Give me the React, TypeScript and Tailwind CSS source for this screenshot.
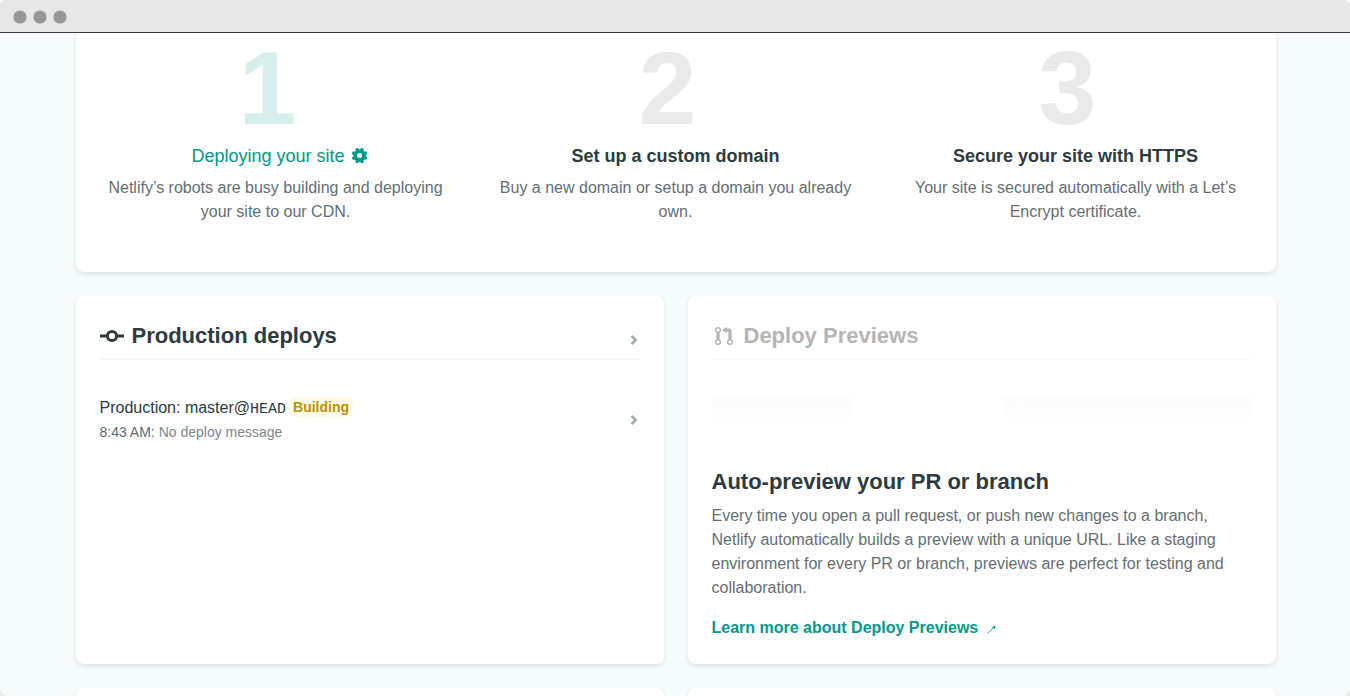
import type { ReactNode } from "react";

const teeth = [22.5, 67.5, 112.5, 157.5, 202.5, 247.5, 292.5, 337.5];

function GearIcon() {
  return (
    <svg width="16" height="16" viewBox="0 0 16 16" fill="currentColor" aria-hidden="true">
      <circle cx="7.600" cy="7.600" r="4.4" fill="none" stroke="currentColor" strokeWidth="3.800" />
      {teeth.map((angle) => (
        <rect key={angle} x="6" y="-0.300" width="3.200" height="3" rx="0.700" transform={`rotate(${angle} 7.6 7.6)`} />
      ))}
    </svg>
  );
}

function CommitIcon() {
  return (
    <svg className="shrink-0" width="24" height="24" viewBox="0 0 24 24" fill="none" stroke="currentColor" aria-hidden="true">
      <path strokeWidth="3" d="M0 12h7M17 12h7" />
      <circle cx="12" cy="12" r="4.600" strokeWidth="3" />
    </svg>
  );
}

function PullRequestIcon() {
  return (
    <svg className="shrink-0" width="24" height="24" viewBox="0 0 24 24" fill="none" stroke="currentColor" aria-hidden="true">
      <circle cx="6" cy="6" r="2.300" strokeWidth="1.500" />
      <circle cx="6" cy="18" r="2.300" strokeWidth="1.500" />
      <circle cx="18" cy="18" r="2.300" strokeWidth="1.500" />
      <path strokeWidth="3.200" d="M6 8.500v7M18 15.500V6" />
      <path strokeWidth="3" d="M19 6H13" />
      <path fill="currentColor" stroke="none" d="M9.500 6 15 3v6z" />
    </svg>
  );
}

function Chevron() {
  return (
    <svg className="mr-0.5 shrink-0" width="8" height="10" viewBox="0 0 8 10" fill="none" stroke="#a3a9ac" strokeWidth="2.600" aria-hidden="true">
      <path d="M1.600 1 5.600 5 1.600 9" />
    </svg>
  );
}

function Step({ number, active, title, children }: { number: number; active?: boolean; title: ReactNode; children: ReactNode }) {
  return (
    <li className="px-4 text-center">
      <div className={active ? "pr-4 text-[104px] leading-none font-bold text-[#d6efec]" : "pr-4 text-[104px] leading-none font-bold text-[#eaeaea]"}>
        {number}
      </div>
      <h3 className={active ? "mt-1 flex items-center justify-center gap-[7px] pl-2 text-lg leading-6 text-[#00998a]" : "mt-1 text-lg leading-6 font-bold text-[#2d3b41]"}>
        {title}
      </h3>
      <p className="mt-2 text-base leading-6 text-[#646e73]">{children}</p>
    </li>
  );
}

const card = "rounded-lg bg-white shadow-[0_2px_4px_rgba(14,30,37,0.12)]";

export default function App() {
  return (
    <div className="h-screen bg-[#ececec] font-['Liberation_Sans',Arial,sans-serif] text-[#2d3b41]">
      <div className="flex h-full flex-col overflow-hidden rounded-b-lg bg-[#f6fcfc]">
        <header className="relative flex h-[33px] shrink-0 items-center rounded-t-md border-b border-[#3b3a45] bg-[#e7e7e7]">
          <svg width="80" height="32" viewBox="0 0 80 32" fill="#979797" aria-hidden="true">
            <circle cx="20" cy="17" r="6.600" />
            <circle cx="40" cy="17" r="6.600" />
            <circle cx="60" cy="17" r="6.600" />
          </svg>
        </header>

        <main className="min-h-0 flex-1 pl-px">
          <div className="mx-auto max-w-[1200px]">
            <section className="rounded-b-lg bg-white pt-[3px] pb-12 shadow-[0_2px_4px_rgba(14,30,37,0.12)]">
              <ol className="grid grid-cols-3">
                <Step number={1} active title={<>Deploying your site <GearIcon /></>}>
                  Netlify’s robots are busy building and deploying your site to our CDN.
                </Step>
                <Step number={2} title="Set up a custom domain">
                  Buy a new domain or setup a domain you already own.
                </Step>
                <Step number={3} title="Secure your site with HTTPS">
                  Your site is secured automatically with a Let’s Encrypt certificate.
                </Step>
              </ol>
            </section>

            <div className="mt-6 grid grid-cols-2 gap-6">
              <section className={`${card} p-6`}>
                <a href="#deploys" className="flex items-center border-b-2 border-[#f5f5f5] pb-1.5">
                  <CommitIcon />
                  <h2 className="ml-2 flex-1 text-[22px] leading-8 font-bold">Production deploys</h2>
                  <span className="pt-2"><Chevron /></span>
                </a>
                <a href="#deploy" className="mt-6 flex items-center py-3">
                  <div className="flex-1">
                    <div className="flex h-6 items-center text-base leading-6">
                      <span>
                        Production: master@<code className="font-['Liberation_Mono',monospace] text-[15px] leading-none">HEAD</code>
                      </span>
                      <span className="mb-0.5 ml-[3px] rounded-md bg-[#fffbe6] px-1 text-sm leading-5 font-bold text-[#bb9107]">Building</span>
                    </div>
                    <p className="text-sm leading-6 text-[#80878b]">
                      <span className="text-[#5f696e]">8:43 AM:</span> No deploy message
                    </p>
                  </div>
                  <Chevron />
                </a>
              </section>

              <section className={`${card} p-6`}>
                <div className="flex items-center border-b-2 border-[#fbfbfb] pb-1.5 text-[#b5b5b5]">
                  <PullRequestIcon />
                  <h2 className="ml-2 text-[22px] leading-8 font-bold">Deploy Previews</h2>
                </div>
                <div className="mt-9 flex h-6 justify-between">
                  <div className="w-[26%] rounded bg-linear-to-b from-[#fcfcfc] to-[#fefefe]" />
                  <div className="w-[46%] rounded bg-linear-to-b from-[#fcfcfc] to-[#fefefe]" />
                </div>
                <h3 className="mt-[46px] text-[22px] leading-8 font-bold">Auto-preview your PR or branch</h3>
                <p className="mt-1.5 text-base leading-6 text-[#646e73]">
                  Every time you open a pull request, or push new changes to a branch, Netlify automatically builds a preview with a
                  unique URL. Like a staging environment for every PR or branch, previews are perfect for testing and collaboration.
                </p>
                <a href="#previews" className="mt-4 flex items-center gap-2 text-base leading-6 font-bold text-[#00998a]">
                  Learn more about Deploy Previews
                  <svg className="mt-1" width="10" height="10" viewBox="0 0 10 10" fill="none" stroke="currentColor" aria-hidden="true">
                    <path strokeWidth="0.800" d="M1.500 8.500 8 2" />
                    <path fill="currentColor" stroke="none" d="M9.600 0.800 8.600 4.200 6 1.800z" />
                  </svg>
                </a>
              </section>

              <section className={`${card} h-12`} />
              <section className={`${card} h-12`} />
            </div>
          </div>
        </main>
      </div>
    </div>
  );
}
